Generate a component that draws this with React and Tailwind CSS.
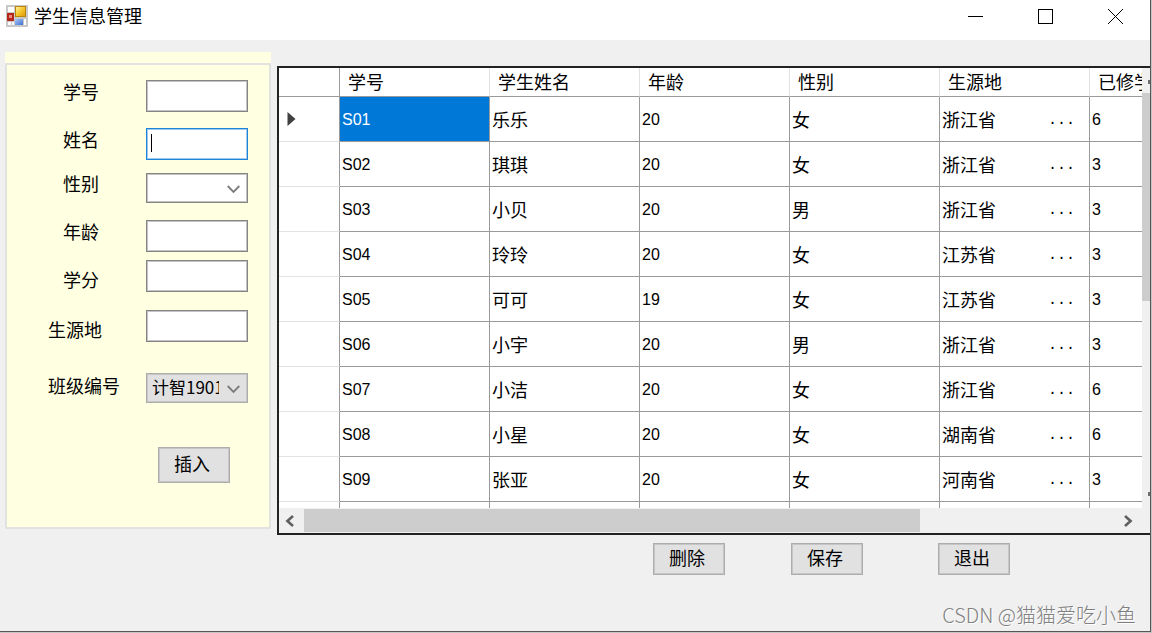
import React from 'react';

const columns = ['学号', '学生姓名', '年龄', '性别', '生源地', '已修学分'];

const students = [
  { id: 'S01', name: '乐乐', age: 20, sex: '女', origin: '浙江省', credit: 6 },
  { id: 'S02', name: '琪琪', age: 20, sex: '女', origin: '浙江省', credit: 3 },
  { id: 'S03', name: '小贝', age: 20, sex: '男', origin: '浙江省', credit: 3 },
  { id: 'S04', name: '玲玲', age: 20, sex: '女', origin: '江苏省', credit: 3 },
  { id: 'S05', name: '可可', age: 19, sex: '女', origin: '江苏省', credit: 3 },
  { id: 'S06', name: '小宇', age: 20, sex: '男', origin: '浙江省', credit: 3 },
  { id: 'S07', name: '小洁', age: 20, sex: '女', origin: '浙江省', credit: 6 },
  { id: 'S08', name: '小星', age: 20, sex: '女', origin: '湖南省', credit: 6 },
  { id: 'S09', name: '张亚', age: 20, sex: '女', origin: '河南省', credit: 3 },
];

const fieldBorder = 'border border-[#848484] shadow-[inset_0_0_0_1px_#c4c4c4]';
const inputClass = `block h-8 w-full ${fieldBorder} bg-white px-1 outline-none`;
const buttonClass =
  'w-[72px] border border-[#adadad] bg-[#e1e1e1] pr-1 pb-1 text-center shadow-[inset_0_0_0_1px_#c6c6c6]';
const cellClass = 'h-[45px] border-r border-b border-[#9a9a9a] p-0 pl-0.5';
const numClass = "pt-0.5 font-['Liberation_Sans',sans-serif] text-base";

function AppIcon() {
  return (
    <svg width="22" height="22" viewBox="0 0 22 22" aria-hidden="true">
      <defs>
        <linearGradient id="gold" x1="0" y1="0" x2="1" y2="1">
          <stop offset="0" stopColor="#fff0a0" />
          <stop offset="0.5" stopColor="#f5c52c" />
          <stop offset="1" stopColor="#dd9a08" />
        </linearGradient>
        <linearGradient id="blue" x1="0" y1="0" x2="1" y2="1">
          <stop offset="0" stopColor="#a9c8f8" />
          <stop offset="1" stopColor="#3f70cf" />
        </linearGradient>
      </defs>
      <rect x="0" y="0" width="22" height="22" fill="#c8c8c8" />
      <rect x="2" y="2" width="6" height="5" fill="#fff" />
      <rect x="2" y="17" width="3" height="3" fill="#fff" />
      <rect x="6" y="17" width="2" height="3" fill="#fff" />
      <rect x="18" y="14" width="2" height="6" fill="#fff" />
      <rect x="1" y="8" width="7" height="8" fill="#b3261b" />
      <rect x="3" y="10" width="3" height="3" fill="#ee8a7d" />
      <rect x="9" y="1" width="11" height="11" fill="#b8860b" />
      <rect x="10" y="2" width="9" height="9" fill="url(#gold)" />
      <rect x="9" y="14" width="8" height="6" fill="url(#blue)" />
    </svg>
  );
}

function TitleBar() {
  return (
    <header className="flex h-10 items-start bg-white pl-1.5 text-black">
      <div className="flex h-8 flex-1 items-center gap-1.5">
        <AppIcon />
        <h1 className="pb-0.5 text-lg leading-6">学生信息管理</h1>
      </div>
      <button type="button" aria-label="最小化" className="flex h-8 w-[70px] items-center justify-center">
        <svg width="15" height="15" viewBox="0 0 15 15" stroke="#000" fill="none">
          <path d="M0 7.5H15" />
        </svg>
      </button>
      <button type="button" aria-label="最大化" className="flex h-8 w-[70px] items-center justify-center">
        <svg width="15" height="15" viewBox="0 0 15 15" stroke="#000" fill="none">
          <rect x="0.5" y="0.5" width="14" height="14" />
        </svg>
      </button>
      <button type="button" aria-label="关闭" className="flex h-8 w-[70px] items-center justify-center">
        <svg width="15" height="15" viewBox="0 0 15 15" stroke="#000" fill="none">
          <path d="M0 0L15 15M15 0L0 15" />
        </svg>
      </button>
    </header>
  );
}

function SelectArrow() {
  return (
    <svg
      className="pointer-events-none absolute top-3 right-2"
      width="13"
      height="9"
      viewBox="0 0 13 9"
      fill="none"
      stroke="#7c7c7c"
      strokeWidth="1.8"
      aria-hidden="true"
    >
      <path d="M0.7 1L6.5 7L12.3 1" />
    </svg>
  );
}

function StudentForm() {
  return (
    <form className="mt-3 w-[266px] shrink-0 bg-[#ffffe1] pt-[11px]">
      <div className="flex h-[466px] items-start border-2 border-[#e2e2de] pl-[41px]">
        <div className="flex w-[98px] flex-col pt-3 leading-7">
          <label htmlFor="sno" className="pl-[15px]">学号</label>
          <label htmlFor="sname" className="mt-5 pl-[15px]">姓名</label>
          <label htmlFor="sex" className="mt-4 pl-[15px]">性别</label>
          <label htmlFor="age" className="mt-5 pl-[15px]">年龄</label>
          <label htmlFor="credit" className="mt-5 pl-[15px]">学分</label>
          <label htmlFor="origin" className="mt-[22px]">生源地</label>
          <label htmlFor="classNo" className="mt-7">班级编号</label>
        </div>
        <div className="w-[102px] pt-[15px]">
          <input id="sno" type="text" className={inputClass} />
          <div className="relative mt-4">
            <input
              id="sname"
              type="text"
              className="block h-8 w-full border border-[#1f84d8] bg-white px-1 caret-transparent shadow-[inset_0_0_0_1px_#9cc8ee] outline-none"
            />
            {/* text caret */}
            <span className="absolute top-1.5 left-[5px] h-[18px] w-px bg-black" />
          </div>
          <div className="relative mt-[13px]">
            <select id="sex" defaultValue="" className={`block h-[30px] w-full appearance-none ${fieldBorder} bg-white`}>
              <option value=""></option>
            </select>
            <SelectArrow />
          </div>
          <input id="age" type="text" className={`mt-[17px] ${inputClass}`} />
          <input id="credit" type="text" className={`mt-2 ${inputClass}`} />
          <input id="origin" type="text" className={`mt-[18px] ${inputClass}`} />
          <div className="relative mt-[31px]">
            <select
              id="classNo"
              className="block h-[30px] w-full appearance-none overflow-hidden border border-[#adadad] bg-[#e1e1e1] pr-7 pb-0.5 pl-[5px] text-[17px] shadow-[inset_0_0_0_1px_#c6c6c6]"
            >
              <option>计智1901</option>
            </select>
            <SelectArrow />
          </div>
          <button type="button" className={`mt-11 ml-3 h-9 ${buttonClass}`}>插入</button>
        </div>
      </div>
    </form>
  );
}

function StudentTable() {
  return (
    <table className="w-[961px] table-fixed border-separate border-spacing-0 text-black">
      <colgroup>
        <col className="w-[61px]" />
        {columns.map((title) => (
          <col key={title} className="w-[150px]" />
        ))}
      </colgroup>
      <thead>
        <tr>
          <th className="h-[29px] border-r border-b border-[#9a9a9a] p-0"></th>
          {columns.map((title) => (
            <th
              key={title}
              className="h-[29px] border-r border-b border-r-[#e2e2e2] border-b-[#9a9a9a] p-0 pb-0.5 pl-2 text-left leading-6 font-normal"
            >
              {title}
            </th>
          ))}
        </tr>
      </thead>
      <tbody>
        {students.map((s, i) => (
          <tr key={s.id}>
            <td className="h-[45px] border-r border-b border-r-[#9a9a9a] border-b-[#e2e2e2] p-0 pl-2">
              {i === 0 && (
                <svg width="9" height="14" viewBox="0 0 9 14" fill="#404040" aria-hidden="true">
                  <path d="M0.5 0L8.5 7L0.5 14Z" />
                </svg>
              )}
            </td>
            <td className={`${cellClass} ${numClass} ${i === 0 ? 'bg-[#0078d7] text-white' : ''}`}>{s.id}</td>
            <td className={cellClass}>{s.name}</td>
            <td className={`${cellClass} ${numClass}`}>{s.age}</td>
            <td className={cellClass}>{s.sex}</td>
            <td className={cellClass}>
              <div className="flex items-center justify-between pr-3.5">
                <span>{s.origin}</span>
                <span className="pt-1 font-['Liberation_Mono',monospace] text-[15px]">...</span>
              </div>
            </td>
            <td className={`${cellClass} ${numClass}`}>{s.credit}</td>
          </tr>
        ))}
        {/* next row, cut off by the viewport */}
        <tr>
          <td className="h-[45px] border-r border-[#9a9a9a]"></td>
          {columns.map((title) => (
            <td key={title} className={cellClass}></td>
          ))}
        </tr>
      </tbody>
    </table>
  );
}

function DataGrid() {
  return (
    <section className="mt-[26px] min-w-0 flex-1 border-y-2 border-l-2 border-[#222] bg-[#f0f0f0]">
      <div className="flex h-[440px]">
        <div className="min-w-0 flex-1 overflow-hidden bg-white">
          <StudentTable />
        </div>
        <div className="flex w-2 flex-col items-end bg-[#f0f0f0]">
          <div className="h-[25px] w-0.5 pt-3">
            <div className="h-1 bg-[#707070]" />
          </div>
          <div className="h-[208px] w-full bg-[#cdcdcd]" />
          <div className="flex w-0.5 flex-1 flex-col justify-end pb-3">
            <div className="h-1 bg-[#707070]" />
          </div>
        </div>
      </div>
      <div className="flex h-[25px] items-center">
        <button type="button" aria-label="向左滚动" className="flex h-full w-[25px] items-center justify-center pr-1">
          <svg width="9" height="12" viewBox="0 0 9 12" fill="none" stroke="#606060" strokeWidth="2.6">
            <path d="M8 1L2.4 6L8 11" />
          </svg>
        </button>
        <div className="h-[23px] flex-1">
          <div className="h-full w-[76%] bg-[#cdcdcd]" />
        </div>
        <button type="button" aria-label="向右滚动" className="mr-2 flex h-full w-7 items-center justify-center">
          <svg width="9" height="12" viewBox="0 0 9 12" fill="none" stroke="#606060" strokeWidth="2.6">
            <path d="M1 1L6.6 6L1 11" />
          </svg>
        </button>
      </div>
    </section>
  );
}

export default function App() {
  return (
    <div className="flex min-h-screen flex-col bg-[#c4c4c4] pr-px pb-px font-['Noto_Sans_CJK_SC',sans-serif] text-lg text-black">
      <div className="flex flex-1 flex-col border-r border-b border-[#555] bg-[#f0f0f0]">
        <TitleBar />
        <main className="flex flex-1 flex-col">
          <div className="flex items-start gap-1.5 pl-[5px]">
            <StudentForm />
            <DataGrid />
          </div>
          <div className="mt-2 flex justify-end pr-[140px] leading-6">
            <button type="button" className={`mr-[66px] h-8 ${buttonClass}`}>删除</button>
            <button type="button" className={`mr-[75px] h-8 ${buttonClass}`}>保存</button>
            <button type="button" className={`h-8 ${buttonClass}`}>退出</button>
          </div>
        </main>
        <footer className="pr-3.5 pb-1 text-right text-xl leading-6 font-light text-[#808080] [text-shadow:1px_1px_0_#fff]">
          CSDN @猫猫爱吃小鱼
        </footer>
      </div>
    </div>
  );
}
